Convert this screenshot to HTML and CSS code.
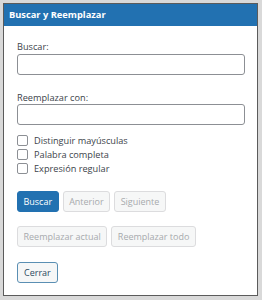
FILE: index.html
```html
<!DOCTYPE html>
<html lang="es">
<head>
<meta charset="utf-8">
<link rel="stylesheet" href="styles.css">
</head>
<body>
<div class="dialog">
  <div class="titlebar">Buscar y Reemplazar</div>
  <div class="content">
    <label class="label">Buscar:</label>
    <input class="field" type="text">
    <label class="label label2">Reemplazar con:</label>
    <input class="field" type="text">
    <div class="checks">
      <label class="check"><span class="box"></span>Distinguir mayúsculas</label>
      <label class="check"><span class="box"></span>Palabra completa</label>
      <label class="check"><span class="box"></span>Expresión regular</label>
    </div>
    <div class="btnrow row1">
      <button class="btn primary">Buscar</button>
      <button class="btn disabled">Anterior</button>
      <button class="btn disabled">Siguiente</button>
    </div>
    <div class="btnrow row2">
      <button class="btn disabled">Reemplazar actual</button>
      <button class="btn disabled">Reemplazar todo</button>
    </div>
    <div class="btnrow row3">
      <button class="btn secondary">Cerrar</button>
    </div>
  </div>
</div>
</body>
</html>
```
FILE: styles.css
```css
html, body {
  margin: 0;
  padding: 0;
}
body {
  background: #d9d9d9;
  padding: 3px 0 0 3px;
  height: 300px;
  box-sizing: border-box;
  font-family: "Open Sans", "Noto Sans", sans-serif;
}
.dialog {
  width: 255px;
  height: 293px;
  box-sizing: border-box;
  border: 1px solid #5b5b5b;
  background: #fff;
  display: flex;
  flex-direction: column;
}
.titlebar {
  height: 22px;
  background: #2271b1;
  color: #fff;
  font-weight: 700;
  font-size: 9.3px;
  line-height: 22px;
  padding-left: 5px;
}
.content {
  padding: 14px 12px 0 13px;
  display: flex;
  flex-direction: column;
}
.label {
  font-size: 9.2px;
  color: #3c434a;
  line-height: 14px;
  height: 13px;
}
.label2 {
  margin-top: 17px;
  height: 11px;
  line-height: 12px;
}
.field {
  margin: 1px 0 0 0;
  width: 228px;
  height: 21px;
  box-sizing: border-box;
  border: 1px solid #8c8f94;
  border-radius: 3px;
  background: #fff;
  padding: 0;
}
.checks {
  margin-top: 10px;
  display: flex;
  flex-direction: column;
  gap: 3px;
}
.check {
  display: flex;
  align-items: center;
  font-size: 9.2px;
  color: #3c434a;
  height: 11px;
}
.box {
  width: 9px;
  height: 9px;
  border: 1px solid #8c8f94;
  border-radius: 2px;
  margin-right: 6px;
  background: #fff;
}
.btnrow {
  display: flex;
  gap: 4px;
}
.row1 { margin-top: 17px; }
.row2 { margin-top: 14px; }
.row3 { margin-top: 15px; }
.btn {
  height: 21px;
  box-sizing: border-box;
  font-family: "Open Sans", "Noto Sans", sans-serif;
  font-size: 9px;
  padding: 0 5.5px;
  border-radius: 3px;
  border: 1px solid #dcdcde;
  background: #f6f7f7;
  color: #a7aaad;
  line-height: 19px;
}
.primary {
  background: #2271b1;
  border-color: #2271b1;
  color: #fff;
  padding: 0 5.5px;
}
.secondary {
  border-color: #5a8fb3;
  color: #2c4a5f;
  background: #f6f7f7;
  padding: 0 6px;
}
```
